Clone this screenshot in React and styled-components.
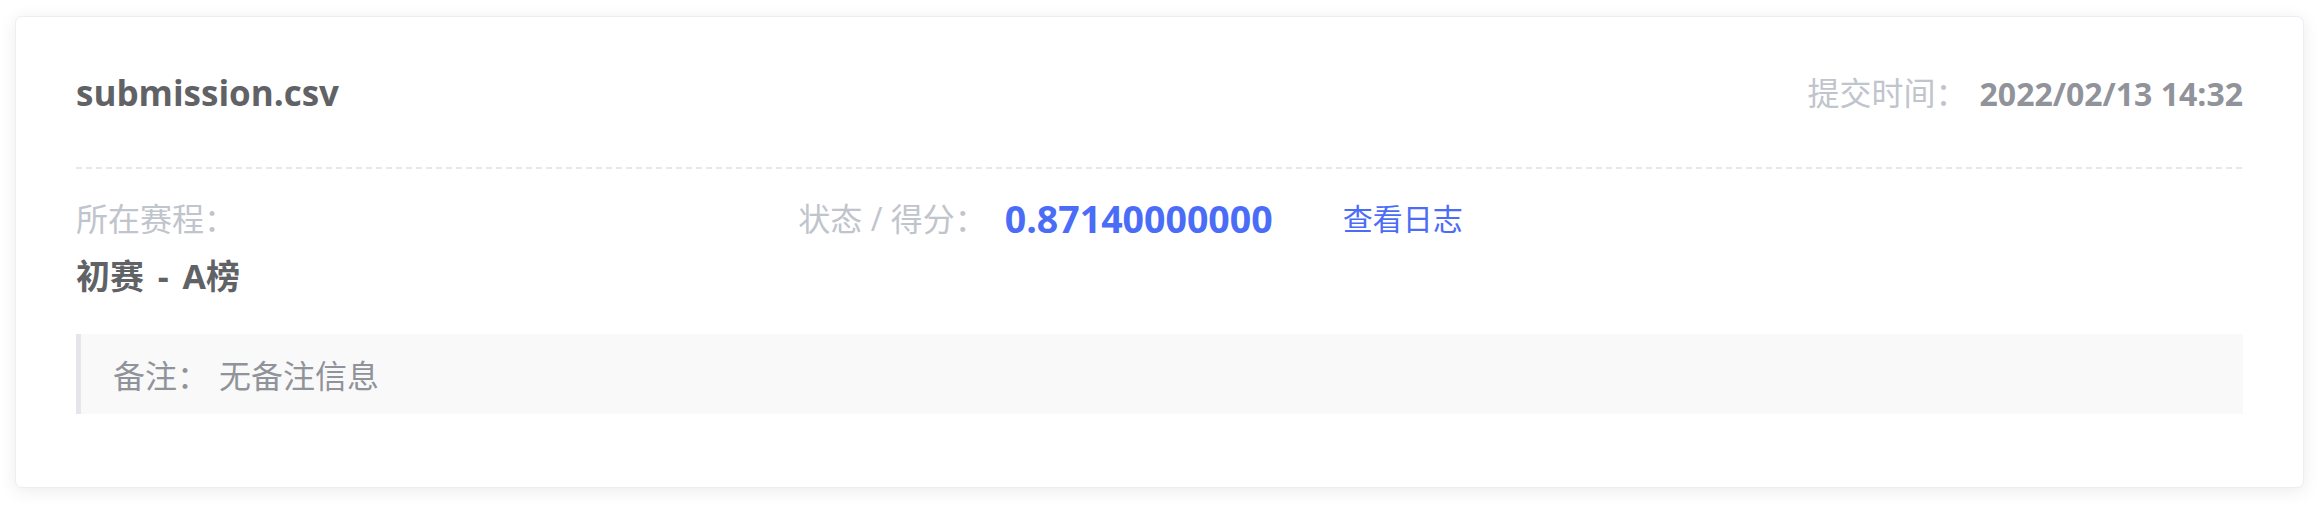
import React from 'react';
import styled, { createGlobalStyle } from 'styled-components';

const GlobalStyle = createGlobalStyle`
  html, body {
    margin: 0;
    padding: 0;
    background: #ffffff;
  }
  body {
    font-family: "Open Sans", "Noto Sans CJK SC", sans-serif;
  }
`;

const Page = styled.div`
  padding: 16px 15px 24px 15px;
`;

const Card = styled.div`
  background: #ffffff;
  border: 1px solid #ebeef5;
  border-radius: 7px;
  box-shadow: 0 3px 18px 0 rgba(0, 0, 0, 0.08);
  padding: 39px 60px 73px 60px;
`;

const Header = styled.div`
  display: flex;
  align-items: center;
  justify-content: space-between;
  padding-bottom: 37px;
`;

const Title = styled.div`
  font-size: 35px;
  line-height: 74px;
  font-weight: 700;
  color: #606266;
`;

const Meta = styled.div`
  display: flex;
  align-items: center;
`;

const Label = styled.span`
  font-size: 32px;
  line-height: 44px;
  color: #c0c4cc;
`;

const DateText = styled.span`
  margin-left: 12px;
  font-size: 32px;
  font-weight: 700;
  color: #909399;
`;

const Divider = styled.div`
  height: 2px;
  background-image: repeating-linear-gradient(
    to right,
    #e6e8ee 0,
    #e6e8ee 6px,
    transparent 6px,
    transparent 10px
  );
`;

const InfoGrid = styled.div`
  display: grid;
  grid-template-columns: repeat(3, 1fr);
  align-items: start;
  margin-top: 28px;
`;

const Cell = styled.div`
  display: flex;
  flex-direction: ${props => (props.inline ? 'row' : 'column')};
  align-items: ${props => (props.inline ? 'center' : 'flex-start')};
`;

const Value = styled.div`
  margin-top: 11px;
  font-size: 34px;
  line-height: 48px;
  font-weight: 700;
  word-spacing: 5px;
  color: #606266;
`;

const Score = styled.span`
  margin-left: 18px;
  font-size: 37.5px;
  line-height: 44px;
  font-weight: 700;
  color: #4a6cf7;
`;

const LogLink = styled.a`
  margin-left: 70px;
  font-size: 30px;
  line-height: 44px;
  color: #4a6cf7;
  text-decoration: none;
  cursor: pointer;
`;

const Remark = styled.div`
  margin-top: 34px;
  height: 80px;
  display: flex;
  align-items: center;
  background: #f9f9fa;
  border-left: 5px solid #e4e6eb;
  padding-left: 32px;
  font-size: 32px;
  color: #909399;
`;

const RemarkValue = styled.span`
  margin-left: 10px;
`;

export default function App() {
  return (
    <Page>
      <GlobalStyle />
      <Card>
        <Header>
          <Title>submission.csv</Title>
          <Meta>
            <Label>提交时间：</Label>
            <DateText>2022/02/13 14:32</DateText>
          </Meta>
        </Header>
        <Divider />
        <InfoGrid>
          <Cell>
            <Label>所在赛程：</Label>
            <Value>初赛 - A榜</Value>
          </Cell>
          <Cell inline>
            <Label>状态 / 得分：</Label>
            <Score>0.87140000000</Score>
            <LogLink>查看日志</LogLink>
          </Cell>
          <Cell />
        </InfoGrid>
        <Remark>
          备注：<RemarkValue>无备注信息</RemarkValue>
        </Remark>
      </Card>
    </Page>
  );
}
